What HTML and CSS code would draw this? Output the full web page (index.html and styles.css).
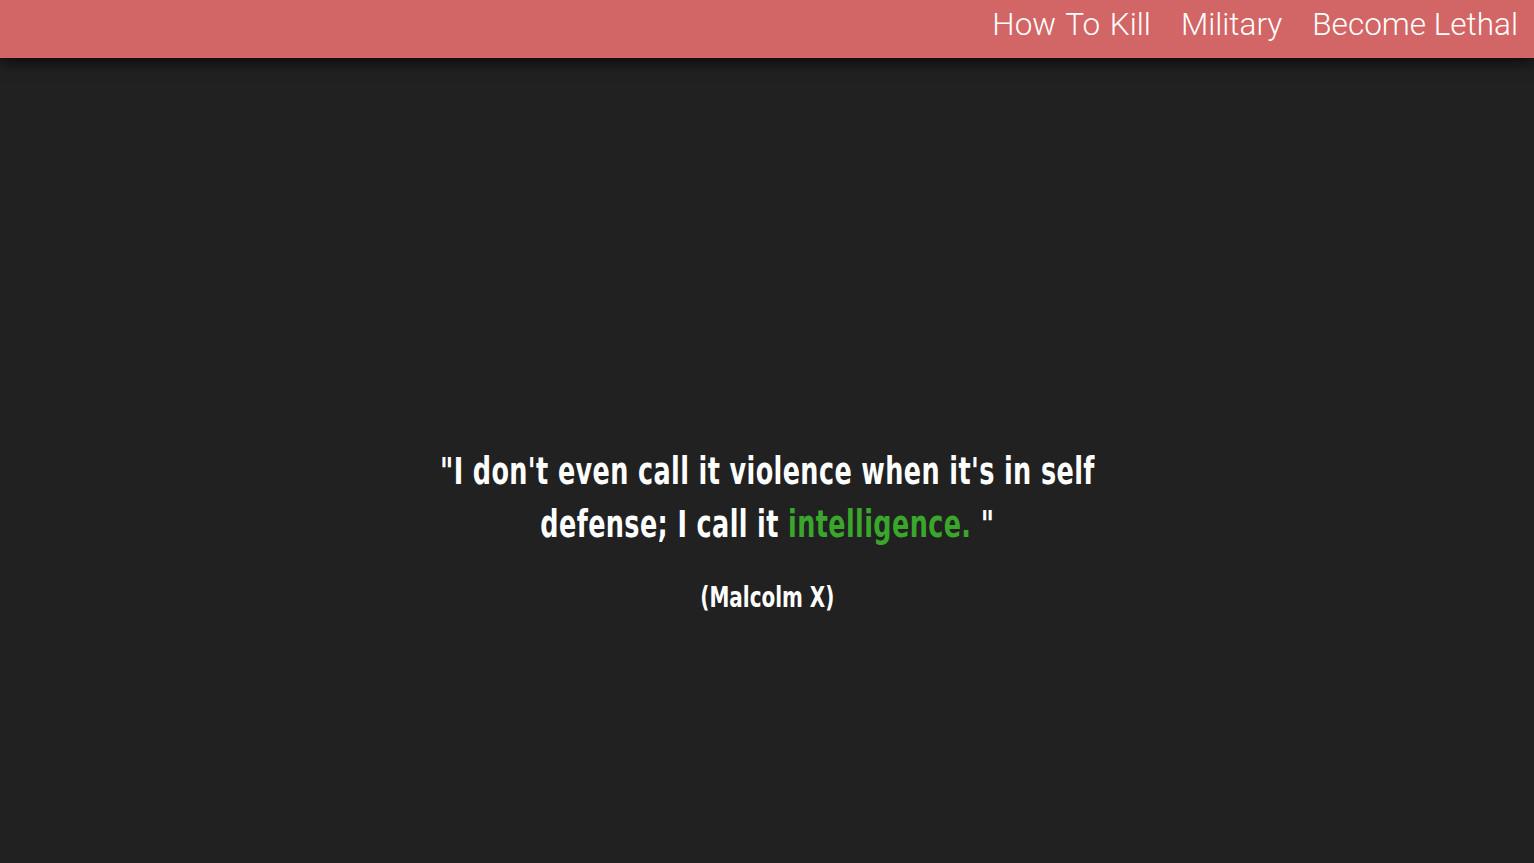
FILE: index.html
```html
<!DOCTYPE html>
<html>
<head>
<meta charset="utf-8">
<link rel="stylesheet" href="styles.css">
</head>
<body>
<header class="topbar">
  <nav class="nav">
    <a class="nav-link" href="#">How To Kill</a>
    <a class="nav-link" href="#">Military</a>
    <a class="nav-link" href="#">Become Lethal</a>
  </nav>
</header>
<main class="main">
  <blockquote class="quote">
    <p class="quote-text">"I don't even call it violence when it's in self<br>defense; I call it <span class="accent">intelligence.</span> "</p>
    <p class="quote-author">(Malcolm X)</p>
  </blockquote>
</main>
</body>
</html>
```
FILE: styles.css
```css
html, body {
  margin: 0;
  padding: 0;
  height: 100%;
}
body {
  background: #212121;
  overflow: hidden;
}
.topbar {
  position: relative;
  z-index: 2;
  height: 58px;
  background: #d26565;
  display: flex;
  justify-content: flex-end;
  align-items: center;
  padding-right: 16px;
  box-shadow: 0 4px 14px rgba(0, 0, 0, 0.7);
}
.nav {
  display: flex;
  gap: 30px;
}
.nav-link {
  font-family: Roboto, "Liberation Sans", sans-serif;
  font-weight: 300;
  font-size: 31.5px;
  color: #ffffff;
  text-decoration: none;
  line-height: 1;
  margin-top: -9px;
}
.nav-link:first-child {
  word-spacing: 2px;
}
.main {
  display: flex;
  justify-content: center;
  padding-top: 387px;
}
.quote {
  margin: 0;
  text-align: center;
  font-family: "DejaVu Sans Condensed", "DejaVu Sans", sans-serif;
  font-weight: bold;
  color: #ffffff;
  transform: scaleX(0.766);
}
.quote-text {
  margin: 0;
  font-size: 37px;
  line-height: 53px;
  letter-spacing: 0.5px;
}
.accent {
  color: #3aa62c;
}
.quote-author {
  margin: 26px 0 0;
  font-size: 29px;
  line-height: 40px;
}
```
